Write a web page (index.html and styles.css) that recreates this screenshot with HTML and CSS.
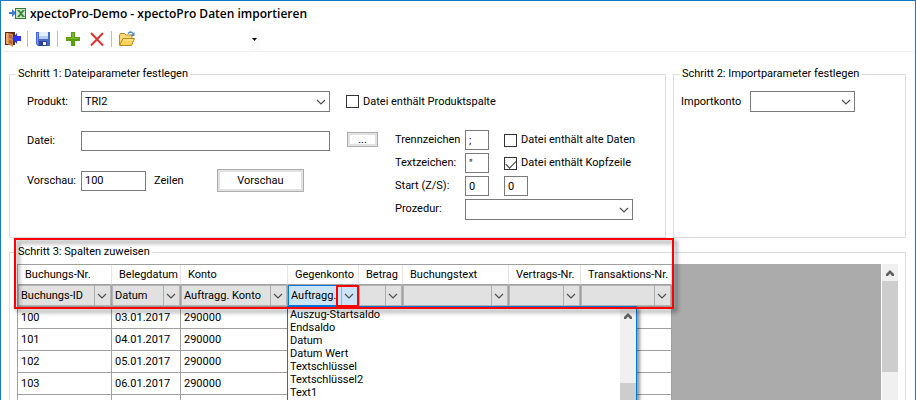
FILE: index.html
```html
<!DOCTYPE html>
<html lang="de">
<head>
<meta charset="utf-8">
<title>xpectoPro-Demo - xpectoPro Daten importieren</title>
<link rel="stylesheet" href="styles.css">
</head>
<body>
<svg class="symbols" aria-hidden="true">
  <symbol id="chevron" viewBox="0 0 10 6"><path d="M1 1l4 4 4-4" fill="none" stroke="#505050" stroke-width="1.2"/></symbol>
  <symbol id="arrow-up" viewBox="0 0 8 6"><path d="M0 6V4l4-4 4 4v2H6L4 3.500 2 6z" fill="#606060"/></symbol>
</svg>
<div class="window">
  <header class="titlebar">
    <svg class="app-icon" viewBox="0 0 17 14" aria-hidden="true">
      <path d="M0 5h3V2l4 4-4 4V7H0z" fill="#3a7bd5"/>
      <rect x="6.500" y="1.500" width="10" height="10" fill="#cfe6c6" stroke="#2c7a33"/>
      <path d="M8 3h2.500l1.500 2L13.500 3H16l-3 3.500L16 10h-2.500L12 8l-1.500 2H8l3-3.500z" fill="#2c8a3a"/>
    </svg>
    <h1>xpectoPro-Demo - xpectoPro Daten importieren</h1>
  </header>
  <div class="toolbar">
    <button type="button" aria-label="Schließen">
      <svg viewBox="0 0 16 16"><path d="M0 1h10v13H0z" fill="#5c2c10"/><path d="M1 2h2v11H1z" fill="#e8a868"/><path d="M3 2l5 1v13l-5-3z" fill="#d98a4e"/><path d="M4 4l3 .5v3L4 7zM4 9l3 .5v4L4 12z" fill="#b5642d"/><path d="M16 5h-4V2L7 7.500 12 13v-3h4z" fill="#2a35f5"/></svg>
    </button>
    <span class="separator"></span>
    <button type="button" aria-label="Speichern">
      <svg viewBox="0 0 16 16"><path d="M1 1h14v14H3l-2-2z" fill="#4a68cc"/><path d="M2 2h1v11H2z" fill="#7f9cf0"/><path d="M4 1h9v7H4z" fill="#e3edff"/><path d="M4 5h9v3H4z" fill="#b5ccf5"/><path d="M4 10h8v5H4z" fill="#2c4590"/><path d="M8 11h3v3H8z" fill="#eef3ff"/></svg>
    </button>
    <span class="separator"></span>
    <button type="button" aria-label="Hinzufügen">
      <svg viewBox="0 0 16 16"><path d="M6 1h4v5h5v4h-5v5H6v-5H1V6h5z" fill="#5a9e10"/><path d="M7 2h2v5h5v1H2V7h5z" fill="#74b52a"/></svg>
    </button>
    <button type="button" class="after" aria-label="Löschen">
      <svg viewBox="0 0 16 16"><path d="M2 2l12 12.500M14 2L2 14.500" fill="none" stroke="#e23232" stroke-width="2"/></svg>
    </button>
    <span class="separator"></span>
    <button type="button" aria-label="Öffnen">
      <svg viewBox="0 0 16 16"><path d="M.5 14V4l1-1.500h4L7 4h6v3.500" fill="#f6d97c" stroke="#b98b1c"/><path d="M.5 14.500L4 7.500h11.500L12.500 14.500z" fill="#fbd35a" stroke="#b98b1c"/><path d="M4.500 9h9.500" stroke="#fff0b0"/><path d="M9 2.500Q11.500-.5 14 2.500" fill="none" stroke="#4f86b8" stroke-width="1.400"/><path d="M15.500 1v4h-4z" fill="#4f86b8"/></svg>
    </button>
    <button type="button" class="more" aria-label="Weitere Optionen">
      <svg viewBox="0 0 5 3"><path d="M0 0h5L2.500 3z" fill="#000"/></svg>
    </button>
  </div>

  <main>
    <div class="groups">
      <fieldset class="group step1">
        <legend>Schritt 1: Dateiparameter festlegen</legend>
        <div class="product">
          <label class="caption" for="produkt">Produkt:</label>
          <span class="select wide"><select id="produkt"><option>TRI2</option></select><svg><use href="#chevron"/></svg></span>
          <label class="check"><input type="checkbox">Datei enthält Produktspalte</label>
        </div>
        <div class="file">
          <div class="source">
            <div class="line">
              <label class="caption" for="datei">Datei:</label>
              <input class="wide" id="datei" type="text">
            </div>
            <div class="line">
              <label class="caption" for="vorschau">Vorschau:</label>
              <input class="count" id="vorschau" type="text" value="100">
              <span class="unit">Zeilen</span>
              <button type="button" class="button">Vorschau</button>
            </div>
          </div>
          <button type="button" class="button browse" aria-label="Datei wählen">...</button>
          <div class="format">
            <label for="trenn">Trennzeichen</label>
            <input class="char" id="trenn" type="text" value=";">
            <label class="check"><input type="checkbox">Datei enthält alte Daten</label>
            <label for="text">Textzeichen:</label>
            <input class="char" id="text" type="text" value="&quot;">
            <label class="check"><input type="checkbox" checked>Datei enthält Kopfzeile</label>
            <label for="start">Start (Z/S):</label>
            <input class="char" id="start" type="text" value="0">
            <input class="char" type="text" value="0" aria-label="Startspalte">
            <label for="prozedur">Prozedur:</label>
            <span class="select procedure"><select id="prozedur"><option></option></select><svg><use href="#chevron"/></svg></span>
          </div>
        </div>
      </fieldset>
      <fieldset class="group step2">
        <legend>Schritt 2: Importparameter festlegen</legend>
        <div class="line">
          <label class="account" for="konto">Importkonto</label>
          <span class="select account-select"><select id="konto"><option></option></select><svg><use href="#chevron"/></svg></span>
        </div>
      </fieldset>
    </div>

    <fieldset class="group step3">
      <legend>Schritt 3: Spalten zuweisen</legend>
      <div class="sheet">
        <div class="grid">
          <table>
            <colgroup><col class="c1"><col class="c2"><col class="c3"><col class="c4"><col class="c5"><col class="c6"><col class="c7"><col class="c8"></colgroup>
            <thead>
              <tr><th>Buchungs-Nr.</th><th>Belegdatum</th><th>Konto</th><th>Gegenkonto</th><th>Betrag</th><th>Buchungstext</th><th>Vertrags-Nr.</th><th>Transaktions-Nr.</th></tr>
              <tr class="mapping">
                <td><span class="select"><select aria-label="Buchungs-Nr."><option>Buchungs-ID</option></select><svg><use href="#chevron"/></svg></span></td>
                <td><span class="select"><select aria-label="Belegdatum"><option>Datum</option></select><svg><use href="#chevron"/></svg></span></td>
                <td><span class="select"><select aria-label="Konto"><option>Auftragg. Konto</option></select><svg><use href="#chevron"/></svg></span></td>
                <td><span class="select open"><select aria-label="Gegenkonto"><option>Auftragg.</option></select><svg><use href="#chevron"/></svg><span class="marker"></span></span>
                  <div class="menu">
                    <ul>
                      <li>Auszug-Startsaldo</li><li>Endsaldo</li><li>Datum</li><li>Datum Wert</li><li>Textschlüssel</li><li>Textschlüssel2</li><li>Text1</li>
                    </ul>
                    <div class="scroll"><svg><use href="#arrow-up"/></svg><div class="thumb"></div></div>
                  </div>
                </td>
                <td><span class="select"><select aria-label="Betrag"><option></option></select><svg><use href="#chevron"/></svg></span></td>
                <td><span class="select"><select aria-label="Buchungstext"><option></option></select><svg><use href="#chevron"/></svg></span></td>
                <td><span class="select"><select aria-label="Vertrags-Nr."><option></option></select><svg><use href="#chevron"/></svg></span></td>
                <td><span class="select"><select aria-label="Transaktions-Nr."><option></option></select><svg><use href="#chevron"/></svg></span></td>
              </tr>
            </thead>
            <tbody>
              <tr><td>100</td><td>03.01.2017</td><td>290000</td><td></td><td></td><td></td><td></td><td></td></tr>
              <tr><td>101</td><td>04.01.2017</td><td>290000</td><td></td><td></td><td></td><td></td><td></td></tr>
              <tr><td>102</td><td>05.01.2017</td><td>290000</td><td></td><td></td><td></td><td></td><td></td></tr>
              <tr><td>103</td><td>06.01.2017</td><td>290000</td><td></td><td></td><td></td><td></td><td></td></tr>
              <tr><td></td><td></td><td></td><td></td><td></td><td></td><td></td><td></td></tr>
            </tbody>
          </table>
          <div class="highlight"></div>
        </div>
        <div class="empty"></div>
        <div class="scroll main-scroll"><svg><use href="#arrow-up"/></svg><div class="thumb"></div></div>
      </div>
    </fieldset>
  </main>
</div>
</body>
</html>
```
FILE: styles.css
```css
* { box-sizing: border-box; }
body {
  margin: 0;
  height: 100vh;
  overflow: hidden;
  background: #fff;
  color: #000;
  font: 11px/16px Roboto, "Liberation Sans", sans-serif;
}
button, input, select { font: inherit; color: inherit; margin: 0; }
.symbols { position: absolute; width: 0; height: 0; }

.window {
  display: flex;
  flex-direction: column;
  height: 100vh;
  border: 1px solid #1979ca;
  border-bottom: 0;
}
.titlebar {
  display: flex;
  align-items: center;
  gap: 4px;
  height: 26px;
  padding-left: 8px;
}
.app-icon { width: 17px; height: 14px; }
h1 { margin: 0; font: 600 12px/18px "Open Sans", "Noto Sans", sans-serif; }

.toolbar {
  display: flex;
  align-items: center;
  height: 25px;
  margin-left: 2px;
  padding-left: 2px;
  border-bottom: 1px solid #f0f0f0;
}
.toolbar button {
  display: flex;
  align-items: center;
  justify-content: center;
  padding: 0;
  border: 0;
  background: none;
}
.toolbar svg { width: 16px; height: 16px; }
.toolbar .after { margin-left: 8px; }
.separator { width: 1px; height: 16px; margin: 0 7px 0 6px; background: #bdbdbd; }
.toolbar .more { width: 11px; height: 21px; margin-left: 114px; background: #fafafa; }
.toolbar .more svg { width: 5px; height: 3px; }

main { flex: 1; min-height: 0; padding: 14px 9px 0 8px; }
.groups { display: grid; grid-template-columns: 657fr 233fr; gap: 7px; }
.group { min-width: 0; margin: 0; border: 1px solid #dcdcdc; }
legend { margin-left: -2px; padding: 0 2px; line-height: 16px; }
.step1 { padding: 9px 8px 18px 17px; }
.step1 legend { margin-left: -11px; }
.step2 { padding: 9px 7px; }
.step2 legend { margin-left: -1px; padding-right: 3px; }
.step3 { margin-top: 6px; padding: 4px 7px 0 7px; }
.step3 legend { margin-left: -1px; }

input[type="text"] {
  height: 20px;
  padding: 0 3px;
  border: 1px solid #7a7a7a;
  background: #fff;
}
.select { position: relative; display: block; }
.select select {
  display: block;
  width: 100%;
  height: 21px;
  padding: 0 18px 0 3px;
  border: 1px solid #7a7a7a;
  border-radius: 0;
  background: #fff;
  appearance: none;
}
.select svg {
  position: absolute;
  top: 8px;
  right: 4px;
  width: 10px;
  height: 6px;
  pointer-events: none;
}
.wide { flex: 0 1 249px; }
.check { display: flex; align-items: center; gap: 4px; white-space: nowrap; }
.check input {
  display: grid;
  width: 13px;
  height: 13px;
  border: 1px solid #333;
  background: #fff;
  appearance: none;
}
.check input:checked::after {
  content: "";
  width: 9px;
  height: 5px;
  margin: 2px 1px;
  border: solid #333;
  border-width: 0 0 1px 1px;
  transform: rotate(-45deg);
}
.button {
  height: 23px;
  padding: 0 16px;
  border: 1px solid #adadad;
  background: #fff;
  box-shadow: inset 0 0 0 2px #e1e1e1;
}

.line, .product { display: flex; align-items: center; }
.caption { flex: 0 0 54px; }
.product { margin-bottom: 18px; }
.product .check { margin-left: 16px; }
.file { display: flex; align-items: flex-start; }
.source { flex: 0 1 303px; }
.source .line + .line { margin-top: 18px; }
.source .line:first-child { padding-top: 1px; }
.count { width: 65px; }
.unit { margin-left: 8px; }
.source .button { width: 87px; margin-left: auto; margin-right: 26px; }
.browse {
  flex: 0 0 31px;
  height: 15px;
  margin: 2px 17px 0 17px;
  padding: 0;
  line-height: 13px;
}
.format {
  display: grid;
  grid-template-columns: 70px 39px auto;
  grid-auto-rows: 20px;
  row-gap: 3px;
  align-items: center;
}
.char { width: 24px; }
.procedure { grid-column: 2 / 4; }
.format .select { width: 168px; }
.account { flex: 0 0 69px; }
.account-select { flex: 0 1 105px; }

.sheet { display: flex; }
.grid { position: relative; flex: none; }
table {
  table-layout: fixed;
  width: 655px;
  border: solid #a0a0a0;
  border-width: 1px 0 0 1px;
  border-spacing: 0;
}
.c1 { width: 94px; }
.c2 { width: 69px; }
.c3 { width: 107px; }
.c4 { width: 71px; }
.c5 { width: 44px; }
.c6 { width: 106px; }
.c7 { width: 72px; }
.c8 { width: 91px; }
th, td {
  height: 22px;
  padding: 0 3px;
  border: solid #a0a0a0;
  border-width: 0 1px 1px 0;
  text-align: left;
  white-space: nowrap;
}
th { height: 20px; padding: 0 0 0 7px; border-right-color: #e5e5e5; font-weight: normal; }
.mapping td { position: relative; padding: 0; }
.mapping select {
  padding-left: 2px;
  border-color: #b4b4b4;
  background: linear-gradient(#adadad, #adadad) right 15px top / 1px 100% no-repeat #e1e1e1;
}
.mapping .select svg { right: 4px; }
.mapping .open select { border-color: #0078d7; background-color: #cce4f7; }
.marker {
  position: absolute;
  z-index: 3;
  inset: 0 -1px -1px auto;
  width: 23px;
  border: 2px solid #f00;
}
.menu {
  position: absolute;
  z-index: 1;
  top: 21px;
  left: -1px;
  display: flex;
  width: 350px;
  height: 100px;
  border: 1px solid #0078d7;
  background: #fff;
  box-shadow: 3px 3px 3px #0006;
  overflow: hidden;
}
.menu ul { flex: 1; margin: 0; padding: 1px 2px; list-style: none; line-height: 13px; }
.scroll {
  display: flex;
  flex-direction: column;
  align-items: center;
  width: 16px;
  background: #f0f0f0;
}
.scroll svg { flex: none; width: 8px; height: 6px; margin-top: 6px; }
.thumb { width: 100%; background: #cdcdcd; }
.menu .thumb { height: 40px; margin-top: 64px; }
.highlight {
  position: absolute;
  z-index: 2;
  inset: -26px -2px auto -3px;
  height: 71px;
  border: 2px solid #f00;
  filter: drop-shadow(3px 3px 2px #0008);
  pointer-events: none;
}
.empty { flex: 1; background: #ababab; }
.main-scroll { margin-left: 1px; }
.main-scroll .thumb { height: 91px; margin-top: 5px; }
```
